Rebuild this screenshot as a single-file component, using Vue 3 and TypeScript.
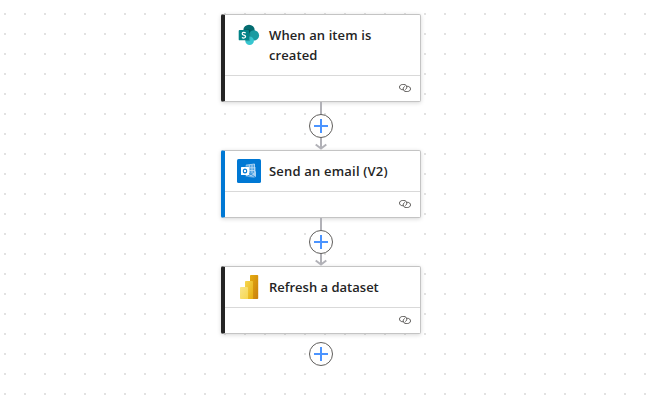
<script setup lang="ts">
interface Step {
  id: string
  title: string
  icon: 'sharepoint' | 'outlook' | 'powerbi'
  accent: 'dark' | 'blue'
}

const steps: Step[] = [
  { id: 'trigger', title: 'When an item is created', icon: 'sharepoint', accent: 'dark' },
  { id: 'email', title: 'Send an email (V2)', icon: 'outlook', accent: 'blue' },
  { id: 'refresh', title: 'Refresh a dataset', icon: 'powerbi', accent: 'dark' },
]
</script>

<template>
  <main class="canvas">
    <template v-for="(step, index) in steps" :key="step.id">
      <article class="card" :class="[step.accent, step.icon]">
        <header class="head">
          <svg v-if="step.icon === 'sharepoint'" class="logo" viewBox="0 0 24 24">
            <circle cx="12" cy="7.400" r="5.700" fill="#036c70" />
            <circle cx="16.900" cy="12.400" r="5.200" fill="#1a9ba1" />
            <circle cx="12.600" cy="17.800" r="4.300" fill="#37c6d0" />
            <path d="M7 6.500h5.300q.9 0 .9.9v9.900q0 .9-.9.9H8.300z" fill="#000" opacity=".18" />
            <rect x="1.700" y="7" width="10.300" height="10.300" rx=".9" fill="#038387" />
            <path d="M8.700 9.900C7.400 9.100 5.200 9.200 5.200 10.700c0 1.800 3.400 1.100 3.400 2.900 0 1.700-2.400 1.700-3.700.9" fill="none" stroke="#fff" stroke-width="1.200" />
          </svg>
          <svg v-else-if="step.icon === 'outlook'" class="logo" viewBox="0 0 24 24">
            <rect width="24" height="24" rx="1.6" fill="#0078d4" />
            <path d="M8.500 6 17.500 5v3H19v9.500L17 19l-8.500-1.500z" fill="#4da1e1" />
            <path d="M9 6.200 17.500 5v8.500M9 8.800h9M9 11.500h9M12.300 6v8M15 6v8" fill="none" stroke="#c4e0f6" stroke-width=".8" />
            <path d="m9 13.500 5 2.200 5-3.700v6L9 17z" fill="#a9d2f3" />
            <path d="m10.500 17 3.500-1.700 4.700 2.900" fill="none" stroke="#2389da" stroke-width=".8" />
            <rect x="4" y="8" width="8" height="8" rx=".5" fill="#fff" />
            <ellipse cx="8" cy="12" rx="1.700" ry="1.900" fill="none" stroke="#0078d4" stroke-width="1.200" />
          </svg>
          <svg v-else class="logo" viewBox="0 0 24 24">
            <defs>
              <linearGradient id="barBack" x1="0" y1="0" x2="1" y2="1">
                <stop offset="0" stop-color="#e6ad10" />
                <stop offset="1" stop-color="#c87e0e" />
              </linearGradient>
              <linearGradient id="barMid" x1="0" y1="0" x2="1" y2="1">
                <stop offset="0" stop-color="#f6d751" />
                <stop offset="1" stop-color="#e6ad10" />
              </linearGradient>
              <linearGradient id="barFront" x1="0" y1="0" x2="1" y2="1">
                <stop offset="0" stop-color="#f9e589" />
                <stop offset="1" stop-color="#f6d751" />
              </linearGradient>
            </defs>
            <rect x="13" y="0" width="8.200" height="24" rx=".8" fill="url(#barBack)" />
            <path d="M8.800 6h6.400q.8 0 .8.8V24H8V6.800Q8 6 8.800 6z" fill="url(#barMid)" />
            <path d="M3.800 12h6.400q.8 0 .8.8V24H3.800q-.8 0-.8-.8V12.800q0-.8.8-.8z" fill="url(#barFront)" />
          </svg>
          <h2 class="title">{{ step.title }}</h2>
        </header>
        <footer class="foot">
          <svg class="link" viewBox="0 0 12 8">
            <path d="M4.400 5.700H3.600C1.800 5.700.5 4.600.5 3.100S1.800.5 3.600.5h1.200c1.800 0 3 1.100 3 2.600 0 1.200-.6 2-1.600 2.400" />
            <path d="M7.600 2.300h.8c1.800 0 3.100 1.100 3.100 2.600S10.200 7.500 8.400 7.500H7.200c-1.800 0-3-1.100-3-2.600 0-1.200.6-2 1.600-2.400" />
          </svg>
        </footer>
      </article>
      <div class="connector" :class="{ last: index === steps.length - 1 }">
        <svg v-if="index < steps.length - 1" class="edge" viewBox="0 0 24 48">
          <path d="M12 0v46M6.700 42.500l5.300 4 5.300-4" />
        </svg>
        <button class="add" aria-label="Add step">
          <svg class="plus" viewBox="0 0 14 14"><path d="M7 0v14M0 7h14" /></svg>
        </button>
      </div>
    </template>
  </main>
</template>

<style>
body {
  margin: 0;
}
</style>

<style scoped>
.canvas {
  box-sizing: border-box;
  height: 406px;
  padding: 14px 0 0 221px;
  overflow: hidden;
  background: conic-gradient(from 90deg at 18px 18px, #e2e2e2 25%, transparent 0) 6px 15px / 20px 20px #fff;
  font-family: "Open Sans", "Noto Sans", sans-serif;
}
.card {
  box-sizing: border-box;
  width: 200px;
  border: 1px solid #c4c4c4;
  border-left: 4px solid #242424;
  border-radius: 2px;
  background: #fff;
  box-shadow: 0 1px 4px rgba(0, 0, 0, 0.16);
}
.card.blue {
  border-left-color: #0078d4;
}
.head {
  display: flex;
  align-items: flex-start;
  gap: 8px;
  padding: 8px 12px;
  border-bottom: 1px solid #d9d9d9;
}
.logo {
  flex: none;
  width: 24px;
  height: 24px;
}
.title {
  flex: 1;
  margin: 0;
  padding: 2px 0;
  font-size: 13px;
  font-weight: 600;
  line-height: 20px;
  color: #242424;
}
.sharepoint .title {
  letter-spacing: 0.1px;
}
.outlook .title {
  letter-spacing: 0.19px;
}
.foot {
  display: flex;
  box-sizing: border-box;
  align-items: center;
  justify-content: flex-end;
  height: 25px;
  padding: 0 9px 1px 0;
}
.link {
  width: 12px;
  height: 8px;
  fill: none;
  stroke: #484644;
  stroke-width: 0.9;
}
.connector {
  display: grid;
  place-items: center;
  width: 200px;
  height: 48px;
}
.connector.last {
  height: 40px;
}
.edge,
.add {
  grid-area: 1 / 1;
}
.edge {
  width: 24px;
  height: 48px;
  fill: none;
  stroke: #b1b1b7;
  stroke-width: 2;
}
.add {
  display: grid;
  place-items: center;
  box-sizing: border-box;
  width: 24px;
  height: 24px;
  padding: 0;
  border: 1px solid #605e5c;
  border-radius: 50%;
  background: #fff;
}
.plus {
  width: 14px;
  height: 14px;
  stroke: #4b94ff;
  stroke-width: 2;
}
</style>
